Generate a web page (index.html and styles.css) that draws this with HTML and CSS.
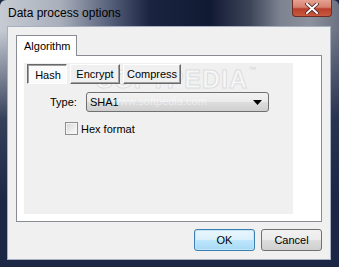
FILE: index.html
```html
<!DOCTYPE html>
<html lang="en">
<head>
    <meta charset="UTF-8">
    <title>Data process options</title>
    <link rel="stylesheet" href="styles.css">
</head>
<body>
    <div class="window">
        <div class="titlebar">
            <span class="title">Data process options</span>
            <div class="close">
                <svg width="14" height="11" viewBox="0 0 14 11">
                    <path d="M2 1 L12 10 M12 1 L2 10" stroke="#4a2020" stroke-width="3.6" stroke-linecap="square"/>
                    <path d="M2 1 L12 10 M12 1 L2 10" stroke="#ffffff" stroke-width="2" stroke-linecap="square"/>
                </svg>
            </div>
        </div>

        <div class="client">
            <div class="tabs">
                <div class="tab-strip">
                    <div class="tab active">Algorithm</div>
                </div>
                <div class="tab-panel">
                    <div class="page">
                        <div class="watermark">SOFTPEDIA<sup>™</sup></div>

                        <div class="subtabs">
                            <span class="subtab pressed">Hash</span>
                            <span class="subtab encrypt">Encrypt</span>
                            <span class="subtab compress">Compress</span>
                        </div>

                        <div class="type-row">
                            <span class="label">Type:</span>
                            <div class="combo">
                                <span>SHA1</span>
                                <svg width="9" height="5" viewBox="0 0 9 5"><path d="M0 0 H9 L4.5 5 Z" fill="#000"/></svg>
                            </div>
                        </div>

                        <div class="check">
                            <span class="box"></span>
                            <span>Hex format</span>
                        </div>

                        <div class="watermark-url">www.softpedia.com</div>
                    </div>
                </div>
            </div>

            <div class="actions">
                <button class="btn default">OK</button>
                <button class="btn">Cancel</button>
            </div>
        </div>
    </div>
</body>
</html>
```

FILE: styles.css
```css
body {
    margin: 0;
    background-color: #1b2745;
    font-family: "Liberation Sans", Arial, sans-serif;
    font-size: 11px;
}

.window {
    position: relative;
    width: 339px;
    height: 267px;
    box-sizing: border-box;
    border-radius: 6px 6px 0 0;
    background:
        linear-gradient(180deg, rgba(27, 39, 69, 0) 0, rgba(27, 39, 69, 0) 30px, rgba(27, 39, 69, 0.85) 120px, #1b2745 200px),
        linear-gradient(90deg, #c6cbd3 0, #a9afbb 60px, #56607a 110px, #1a2440 150px, #111a33 210px, #3d4559 250px, #7c828f 280px, #8d929e 310px, #6c7282 339px);
    overflow: hidden;
}

.titlebar {
    height: 26px;
    display: flex;
    align-items: center;
}

.title {
    padding-left: 8px;
    font-size: 12px;
    color: #000;
}

.close {
    position: absolute;
    top: 0;
    right: 7px;
    width: 40px;
    height: 17px;
    box-sizing: border-box;
    border: 1px solid #6e2c24;
    border-top: none;
    border-radius: 0 0 4px 4px;
    background: linear-gradient(180deg, #e6a291 0, #d4816e 45%, #b9402c 55%, #c9593f 100%);
    display: flex;
    align-items: center;
    justify-content: center;
}

.client {
    margin-left: 7px;
    width: 324px;
    height: 234px;
    box-sizing: border-box;
    border: 1px solid #a7b0c0;
    background-color: #f0f0f0;
    display: flex;
    flex-direction: column;
}

.tabs {
    margin: 8px 0 0 8px;
    width: 306px;
}

.tab-strip {
    display: flex;
    height: 20px;
}

.tab {
    width: 61px;
    box-sizing: border-box;
    border: 1px solid #898c95;
    border-bottom: none;
    padding: 4px 0 0 7px;
    background-color: #fff;
    color: #000;
}

.tab.active {
    height: 21px;
}

.tab-panel {
    height: 167px;
    box-sizing: border-box;
    border: 1px solid #898c95;
    background-color: #fff;
    padding: 7px 28px 7px 7px;
}

.page {
    position: relative;
    height: 100%;
    background-color: #f0f0f0;
    padding: 1px 0 0 3px;
    box-sizing: border-box;
    overflow: hidden;
}

.subtabs {
    position: relative;
    z-index: 1;
    display: flex;
    gap: 3px;
    height: 20px;
}

.subtab {
    box-sizing: border-box;
    height: 20px;
    padding-top: 3px;
    text-align: center;
    border: 1px solid;
    border-color: #fff #696969 #696969 #fff;
    box-shadow: inset -1px -1px 0 #a0a0a0;
    background-color: #f0f0f0;
    color: #000;
}

.subtab.pressed {
    width: 40px;
    border-color: #696969 #fff #fff #696969;
    box-shadow: inset 1px 1px 0 #a0a0a0;
    background-color: #fbfbfb;
    padding: 4px 0 0 2px;
}

.subtab.encrypt {
    width: 50px;
}

.subtab.compress {
    width: 58px;
}

.type-row {
    position: relative;
    z-index: 1;
    display: flex;
    align-items: center;
    margin-top: 8px;
}

.type-row .label {
    width: 36px;
    margin-left: 23px;
    color: #000;
}

.combo {
    width: 183px;
    height: 20px;
    box-sizing: border-box;
    border: 1px solid #707070;
    border-radius: 3px;
    background: linear-gradient(180deg, #f2f2f2 0, #ebebeb 50%, #dddddd 51%, #cfcfcf 100%);
    display: flex;
    align-items: center;
    justify-content: space-between;
    padding: 0 6px 0 3px;
    color: #000;
}

.check {
    display: flex;
    align-items: center;
    gap: 3px;
    margin: 10px 0 0 38px;
    color: #000;
}

.box {
    width: 13px;
    height: 13px;
    box-sizing: border-box;
    border: 1px solid #8f8f8f;
    background: linear-gradient(135deg, #d6d6d6 0, #f2f2f2 70%, #fff 100%);
    box-shadow: inset 0 0 0 1px #f4f4f4;
}

.watermark {
    position: absolute;
    top: 2px;
    left: 72px;
    z-index: 0;
    font-size: 25px;
    font-weight: bold;
    letter-spacing: 1px;
    color: rgba(255, 255, 255, 0.5);
    -webkit-text-stroke: 1px rgba(205, 205, 205, 0.6);
    pointer-events: none;
    white-space: nowrap;
}

.watermark sup {
    font-size: 8px;
    font-weight: normal;
    vertical-align: top;
    -webkit-text-stroke: 0;
    color: rgba(190, 190, 190, 0.6);
}

.watermark-url {
    position: absolute;
    top: 32px;
    left: 88px;
    z-index: 2;
    font-size: 11px;
    color: rgba(255, 255, 255, 0.5);
    pointer-events: none;
}

.actions {
    display: flex;
    justify-content: flex-end;
    gap: 6px;
    padding: 7px 8px 0 0;
}

.btn {
    width: 61px;
    height: 22px;
    border: 1px solid #707070;
    border-radius: 3px;
    background: linear-gradient(180deg, #f2f2f2 0, #ebebeb 50%, #dddddd 51%, #cfcfcf 100%);
    font-family: "Liberation Sans", Arial, sans-serif;
    font-size: 11px;
    color: #000;
    padding: 0;
}

.btn.default {
    border-color: #3c7fb1;
    background: linear-gradient(180deg, #eaf6fd 0, #d9f0fc 50%, #bee6fd 51%, #a7d9f5 100%);
    box-shadow: inset 0 0 0 1px #c4e5f6;
}
```
